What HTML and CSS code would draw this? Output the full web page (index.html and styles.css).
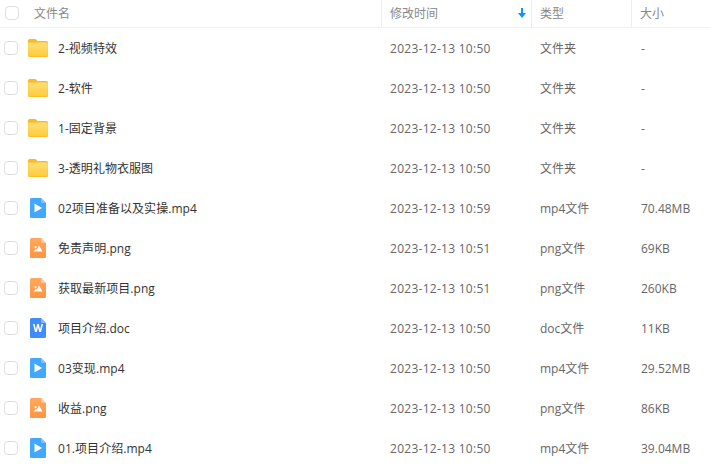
FILE: index.html
```html
<!DOCTYPE html>
<html lang="zh-CN">
  <head>
    <meta charset="UTF-8" />
    <title>文件列表</title>
    <link rel="stylesheet" href="styles.css">
  </head>
  <body>
    <svg class="icon-defs" width="0" height="0" aria-hidden="true">
      <defs>
        <linearGradient id="folder-front" x1="0" y1="0" x2="0" y2="1">
          <stop offset="0" stop-color="#ffe07a" />
          <stop offset="1" stop-color="#ffcb38" />
        </linearGradient>
        <linearGradient id="image-body" x1="0" y1="0" x2="0" y2="1">
          <stop offset="0" stop-color="#ffa95f" />
          <stop offset="1" stop-color="#ff9440" />
        </linearGradient>
        <symbol id="icon-folder" viewBox="0 0 20 18">
          <path d="M1.500 0H7.500L9.500 2H18.500A1.500 1.500 0 0 1 20 3.500V16.500A1.500 1.500 0 0 1 18.500 18H1.500A1.500 1.500 0 0 1 0 16.500V1.500A1.500 1.500 0 0 1 1.500 0Z" fill="#ffb81f" />
          <path d="M1.200 3.400H18.800A1 1 0 0 1 19.800 4.400V16.200A1 1 0 0 1 18.800 17.200H1.200A1 1 0 0 1 0.200 16.200V4.400A1 1 0 0 1 1.200 3.400Z" fill="url(#folder-front)" />
        </symbol>
        <symbol id="icon-video" viewBox="0 0 16 20">
          <path d="M1.500 0H11L16 5V18.500A1.500 1.500 0 0 1 14.500 20H1.500A1.500 1.500 0 0 1 0 18.500V1.500A1.500 1.500 0 0 1 1.500 0Z" fill="#42a8ff" />
          <path d="M11 0L16 5H12.500A1.500 1.500 0 0 1 11 3.500Z" fill="#7cc3ff" />
          <path d="M4.500 5.500L12 10L4.500 14.500Z" fill="#fff" />
        </symbol>
        <symbol id="icon-image" viewBox="0 0 16 20">
          <path d="M1.500 0H11L16 5V18.500A1.500 1.500 0 0 1 14.500 20H1.500A1.500 1.500 0 0 1 0 18.500V1.500A1.500 1.500 0 0 1 1.500 0Z" fill="url(#image-body)" />
          <path d="M11 0L16 5H12.500A1.500 1.500 0 0 1 11 3.500Z" fill="#ffc697" />
          <circle cx="5.500" cy="9.200" r="1.100" fill="#fff" />
          <path d="M3.500 13.500L6 10.800L7 11.600L9 7.600L12.500 13.500Z" fill="#fff" />
        </symbol>
        <symbol id="icon-word" viewBox="0 0 16 20">
          <path d="M1.500 0H11L16 5V18.500A1.500 1.500 0 0 1 14.500 20H1.500A1.500 1.500 0 0 1 0 18.500V1.500A1.500 1.500 0 0 1 1.500 0Z" fill="#3f8cff" />
          <path d="M11 0L16 5H12.500A1.500 1.500 0 0 1 11 3.500Z" fill="#86b8ff" />
          <path d="M3 6L5 14H6.800L8 9.200L9.200 14H11L13 6H11.400L10.100 11.400L8.800 6H7.200L5.900 11.400L4.600 6Z" fill="#fff" />
        </symbol>
      </defs>
    </svg>

    <div class="file-table">
      <div class="table-head">
        <div class="head-cell head-name"><span class="checkbox"></span><span class="head-title">文件名</span></div>
        <div class="head-cell head-time">修改时间<span class="sort-arrow">
          <svg width="8" height="10" viewBox="0 0 8 10"><path d="M3 0H5V5H8L4 10L0 5H3Z" fill="#0a95ff" /></svg>
        </span></div>
        <div class="head-cell">类型</div>
        <div class="head-cell">大小</div>
      </div>

      <div class="file-row">
        <div class="cell-name"><span class="checkbox"></span><svg class="icon folder"><use href="#icon-folder" /></svg><span class="file-name">2-视频特效</span></div>
        <div class="cell cell-time">2023-12-13 10:50</div><div class="cell">文件夹</div><div class="cell cell-size">-</div>
      </div>
      <div class="file-row">
        <div class="cell-name"><span class="checkbox"></span><svg class="icon folder"><use href="#icon-folder" /></svg><span class="file-name">2-软件</span></div>
        <div class="cell cell-time">2023-12-13 10:50</div><div class="cell">文件夹</div><div class="cell cell-size">-</div>
      </div>
      <div class="file-row">
        <div class="cell-name"><span class="checkbox"></span><svg class="icon folder"><use href="#icon-folder" /></svg><span class="file-name">1-固定背景</span></div>
        <div class="cell cell-time">2023-12-13 10:50</div><div class="cell">文件夹</div><div class="cell cell-size">-</div>
      </div>
      <div class="file-row">
        <div class="cell-name"><span class="checkbox"></span><svg class="icon folder"><use href="#icon-folder" /></svg><span class="file-name">3-透明礼物衣服图</span></div>
        <div class="cell cell-time">2023-12-13 10:50</div><div class="cell">文件夹</div><div class="cell cell-size">-</div>
      </div>
      <div class="file-row">
        <div class="cell-name"><span class="checkbox"></span><svg class="icon file"><use href="#icon-video" /></svg><span class="file-name">02项目准备以及实操.mp4</span></div>
        <div class="cell cell-time">2023-12-13 10:59</div><div class="cell">mp4文件</div><div class="cell cell-size">70.48MB</div>
      </div>
      <div class="file-row">
        <div class="cell-name"><span class="checkbox"></span><svg class="icon file"><use href="#icon-image" /></svg><span class="file-name">免责声明.png</span></div>
        <div class="cell cell-time">2023-12-13 10:51</div><div class="cell">png文件</div><div class="cell cell-size">69KB</div>
      </div>
      <div class="file-row">
        <div class="cell-name"><span class="checkbox"></span><svg class="icon file"><use href="#icon-image" /></svg><span class="file-name">获取最新项目.png</span></div>
        <div class="cell cell-time">2023-12-13 10:51</div><div class="cell">png文件</div><div class="cell cell-size">260KB</div>
      </div>
      <div class="file-row">
        <div class="cell-name"><span class="checkbox"></span><svg class="icon file"><use href="#icon-word" /></svg><span class="file-name">项目介绍.doc</span></div>
        <div class="cell cell-time">2023-12-13 10:50</div><div class="cell">doc文件</div><div class="cell cell-size">11KB</div>
      </div>
      <div class="file-row">
        <div class="cell-name"><span class="checkbox"></span><svg class="icon file"><use href="#icon-video" /></svg><span class="file-name">03变现.mp4</span></div>
        <div class="cell cell-time">2023-12-13 10:50</div><div class="cell">mp4文件</div><div class="cell cell-size">29.52MB</div>
      </div>
      <div class="file-row">
        <div class="cell-name"><span class="checkbox"></span><svg class="icon file"><use href="#icon-image" /></svg><span class="file-name">收益.png</span></div>
        <div class="cell cell-time">2023-12-13 10:50</div><div class="cell">png文件</div><div class="cell cell-size">86KB</div>
      </div>
      <div class="file-row">
        <div class="cell-name"><span class="checkbox"></span><svg class="icon file"><use href="#icon-video" /></svg><span class="file-name">01.项目介绍.mp4</span></div>
        <div class="cell cell-time">2023-12-13 10:50</div><div class="cell">mp4文件</div><div class="cell cell-size">39.04MB</div>
      </div>
    </div>
  </body>
</html>
```

FILE: styles.css
```css
* {
  box-sizing: border-box;
}

html,
body {
  height: 100%;
}

body {
  margin: 0;
  overflow: hidden;
  background-color: #fff;
  font-family: "Open Sans", "Noto Sans CJK SC", sans-serif;
  font-size: 12px;
}

.icon-defs {
  display: block;
  height: 0;
}

.file-table {
  width: 710px;
}

.table-head,
.file-row {
  display: grid;
  grid-template-columns: 381px 150px 100px 79px;
}

.table-head {
  height: 28px;
  border-bottom: 1px solid #f2f2f2;
  color: #888;
}

.head-cell {
  display: flex;
  align-items: center;
  padding-left: 8px;
  padding-bottom: 2px;
  border-left: 1px solid #eee;
}

.head-name {
  padding-left: 5px;
  border-left: 0;
}

.head-title {
  margin-left: 15px;
}

.head-time {
  position: relative;
}

.sort-arrow {
  position: absolute;
  right: 5px;
  top: 8px;
  line-height: 0;
}

.checkbox {
  flex: none;
  width: 14px;
  height: 14px;
  border: 1px solid #dedede;
  border-radius: 4px;
  background-color: #fff;
}

.file-row {
  height: 40px;
  color: #666;
}

.cell-name {
  display: flex;
  align-items: center;
  padding-left: 4px;
  color: #333;
}

.file-name {
  letter-spacing: 0.05px;
}

.cell {
  display: flex;
  align-items: center;
  padding-left: 9px;
}

.cell-time {
  letter-spacing: 0.27px;
}

.cell-size {
  padding-left: 10px;
}

.icon {
  flex: none;
  display: block;
}

.folder {
  width: 20px;
  height: 18px;
  margin-left: 10px;
  margin-right: 10px;
}

.file {
  width: 16px;
  height: 20px;
  margin-left: 12px;
  margin-right: 12px;
}
```
